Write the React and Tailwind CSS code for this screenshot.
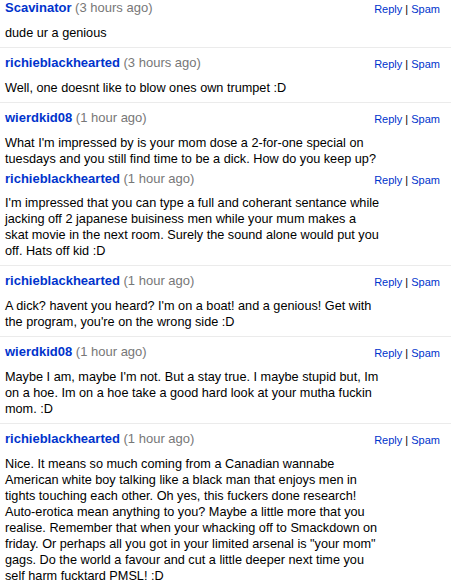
import React from 'react';

const comments = [
    {
        user: 'Scavinator',
        time: '3 hours ago',
        lines: ['dude ur a genious'],
        box: 'pt-0 pb-[6px] border-b',
    },
    {
        user: 'richieblackhearted',
        time: '3 hours ago',
        lines: ['Well, one doesnt like to blow ones own trumpet :D'],
        box: 'pt-[7px] pb-[6px] border-b',
    },
    {
        user: 'wierdkid08',
        time: '1 hour ago',
        lines: [
            "What I'm impressed by is your mom dose a 2-for-one special on",
            'tuesdays and you still find time to be a dick. How do you keep up?',
        ],
        box: 'pt-[7px] pb-0',
    },
    {
        user: 'richieblackhearted',
        time: '1 hour ago',
        lines: [
            "I'm impressed that you can type a full and coherant sentance while",
            'jacking off 2 japanese buisiness men while your mum makes a',
            'skat movie in the next room. Surely the sound alone would put you',
            'off. Hats off kid :D',
        ],
        box: 'pt-[4px] pb-[6px] border-b',
        tight: true,
    },
    {
        user: 'richieblackhearted',
        time: '1 hour ago',
        lines: [
            "A dick? havent you heard? I'm on a boat! and a genious! Get with",
            "the program, you're on the wrong side :D",
        ],
        box: 'pt-[7px] pb-[6px] border-b',
    },
    {
        user: 'wierdkid08',
        time: '1 hour ago',
        lines: [
            "Maybe I am, maybe I'm not. But a stay true. I maybe stupid but, Im",
            'on a hoe. Im on a hoe take a good hard look at your mutha fuckin',
            'mom. :D',
        ],
        box: 'pt-[7px] pb-[6px] border-b',
    },
    {
        user: 'richieblackhearted',
        time: '1 hour ago',
        lines: [
            'Nice. It means so much coming from a Canadian wannabe',
            'American white boy talking like a black man that enjoys men in',
            'tights touching each other. Oh yes, this fuckers done research!',
            'Auto-erotica mean anything to you? Maybe a little more that you',
            'realise. Remember that when your whacking off to Smackdown on',
            'friday. Or perhaps all you got in your limited arsenal is "your mom"',
            'gags. Do the world a favour and cut a little deeper next time you',
            'self harm fucktard PMSL! :D',
        ],
        box: 'pt-[7px] pb-[6px]',
    },
];

const Comment = ({ c }) => (
    <div className={`pl-[5px] pr-[11px] border-[#ebebeb] ${c.box}`}>
        {/* cabeçalho: autor + hora, ações à direita */}
        <div className="flex items-baseline justify-between h-4 leading-4">
            <div className="text-[13px] whitespace-nowrap">
                <a href="#" className="font-bold text-[#0033cc]">{c.user}</a>{' '}
                <span className="text-[#777]">({c.time})</span>
            </div>
            <div className="relative top-[1px] text-[11px] whitespace-nowrap">
                <a href="#" className="text-[#0033cc]">Reply</a>
                <span className="text-black"> | </span>
                <a href="#" className="text-[#0033cc]">Spam</a>
            </div>
        </div>
        <p className={`${c.tight ? 'mt-[8px]' : 'mt-[9px]'} text-[12.7px] leading-4 text-black whitespace-nowrap`}>
            {c.lines.map((l, i) => (
                <React.Fragment key={i}>
                    {l}
                    {i < c.lines.length - 1 && <br />}
                </React.Fragment>
            ))}
        </p>
    </div>
);

const App = () => {
    return (
        <div className="w-[451px] h-[586px] overflow-hidden bg-white font-['Liberation_Sans',Arial,sans-serif]">
            {comments.map((c, i) => (
                <Comment key={i} c={c} />
            ))}
        </div>
    );
};

export default App;
